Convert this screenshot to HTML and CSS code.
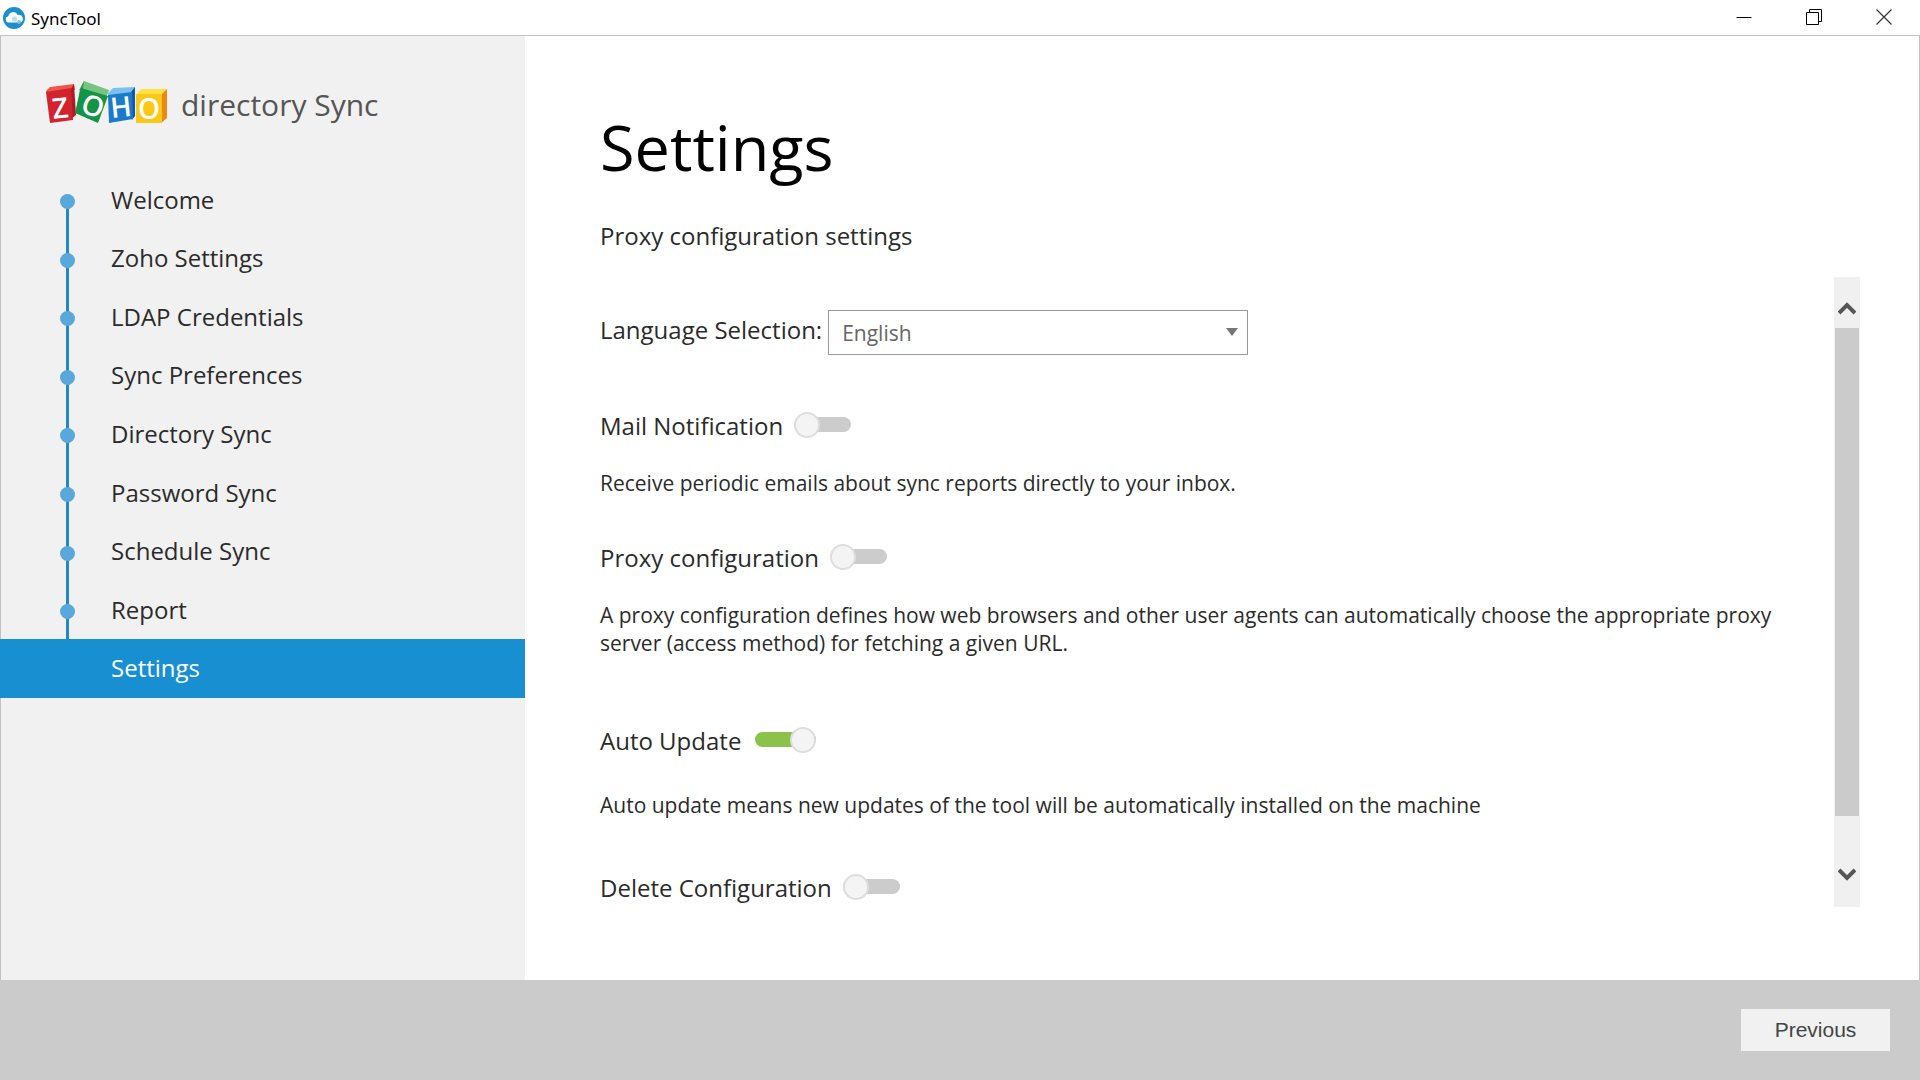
FILE: index.html
```html
<!DOCTYPE html>
<html lang="en">
<head>
<meta charset="utf-8">
<title>SyncTool</title>
<link rel="stylesheet" href="styles.css">
</head>
<body>
<div class="window">
  <header class="titlebar">
    <svg class="app-icon" viewBox="0 0 24 24" aria-hidden="true">
      <circle cx="12" cy="12" r="11" fill="#1d8fce"/>
      <path d="M6.5 16.5a3.2 3.2 0 0 1-.2-6.3 5 5 0 0 1 9.4-1.3 3.9 3.9 0 0 1 2.3 7.600z" fill="#fff"/>
      <circle cx="12.5" cy="13" r="2.6" fill="#b9dcf0"/>
      <circle cx="17" cy="16" r="2" fill="#7fbfe3"/>
    </svg>
    <span class="app-name">SyncTool</span>
    <div class="window-controls">
      <button type="button" aria-label="Minimize"><svg viewBox="0 0 16 16"><path d="M.5 8.5h15" stroke="#000" stroke-width="1"/></svg></button>
      <button type="button" aria-label="Restore"><svg viewBox="0 0 16 16"><path d="M.5 3.5h12v12H.5zM3.5 3.5v-3h12v12h-3" fill="none" stroke="#000"/></svg></button>
      <button type="button" aria-label="Close"><svg viewBox="0 0 16 16"><path d="M.5.5l15 15M15.5.5l-15 15" stroke="#333" stroke-width="1.2"/></svg></button>
    </div>
  </header>
  <div class="body">
    <aside class="sidebar">
      <div class="brand">
        <svg class="logo" viewBox="0 0 122 42" role="img" aria-label="Zoho">
          <path d="M1 8l4-4 24-3 1 6-28 5z" fill="#f0574c"/>
          <path d="M26 6l3-5 2 31-5 4z" fill="#a81c22"/>
          <path d="M1 9l25-4 2 32-23 3z" fill="#d2232f"/>
          <path d="M34 7l5-9 25 9-3 8z" fill="#76c57e"/>
          <path d="M35 6l4-8-3 24-5 6z" fill="#2f9a4b"/>
          <path d="M36 5l27 8-10 27-23-10z" fill="#159447"/>
          <path d="M63 10l5-5 22-1-3 7-24 3z" fill="#7cc0f0"/>
          <path d="M86 9l4-5v29l-3 4z" fill="#0d5aa6"/>
          <path d="M63 12l24-3 1 27-24 4z" fill="#1a7bc9"/>
          <path d="M91 12l5-6h26l-5 6z" fill="#ffe24a"/>
          <path d="M116 12l6-6v29l-6 5z" fill="#e88a14"/>
          <path d="M91 11h26v29H91z" fill="#fbc915"/>
          <g class="logo-letters">
            <text x="15" y="35" transform="rotate(-6 15 24)">Z</text>
            <text x="48" y="33" transform="rotate(20 48 23)">O</text>
            <text x="76" y="34" transform="rotate(-6 76 24)">H</text>
            <text x="104" y="36">O</text>
          </g>
        </svg>
        <span class="brand-name">directory Sync</span>
      </div>
      <nav class="steps">
        <a href="#welcome">Welcome</a>
        <a href="#zoho">Zoho Settings</a>
        <a href="#ldap">LDAP Credentials</a>
        <a href="#preferences">Sync Preferences</a>
        <a href="#directory">Directory Sync</a>
        <a href="#password">Password Sync</a>
        <a href="#schedule">Schedule Sync</a>
        <a href="#report">Report</a>
        <a href="#settings" class="current" aria-current="page">Settings</a>
      </nav>
    </aside>
    <main class="content">
      <h1>Settings</h1>
      <p class="subtitle">Proxy configuration settings</p>
      <div class="pane">
        <form class="options">
          <div class="row language">
            <label for="language">Language Selection:</label>
            <span class="select"><select id="language"><option>English</option></select></span>
          </div>
          <section class="option">
            <div class="row"><label for="mail">Mail Notification</label><input type="checkbox" class="switch" id="mail"></div>
            <p>Receive periodic emails about sync reports directly to your inbox.</p>
          </section>
          <section class="option proxy">
            <div class="row"><label for="proxy">Proxy configuration</label><input type="checkbox" class="switch" id="proxy"></div>
            <p>A proxy configuration defines how web browsers and other user agents can automatically choose the appropriate proxy server (access method) for fetching a given URL.</p>
          </section>
          <section class="option update">
            <div class="row"><label for="update">Auto Update</label><input type="checkbox" class="switch" id="update" checked></div>
            <p>Auto update means new updates of the tool will be automatically installed on the machine</p>
          </section>
          <section class="option">
            <div class="row"><label for="delete">Delete Configuration</label><input type="checkbox" class="switch" id="delete"></div>
          </section>
        </form>
        <div class="scrollbar">
          <button type="button" aria-label="Scroll up"><svg viewBox="0 0 18 14"><path d="M1 12l8-8 8 8" fill="none" stroke="#555" stroke-width="4"/></svg></button>
          <div class="track"><div class="thumb"></div></div>
          <button type="button" aria-label="Scroll down"><svg viewBox="0 0 18 14"><path d="M1 2l8 8 8-8" fill="none" stroke="#555" stroke-width="4"/></svg></button>
        </div>
      </div>
    </main>
  </div>
  <footer class="footer"><button type="button" class="previous">Previous</button></footer>
</div>
</body>
</html>
```
FILE: styles.css
```css
*, *::before, *::after { box-sizing: border-box; }

body {
  margin: 0;
  font-family: "Open Sans", "Noto Sans", sans-serif;
  font-size: 24px;
  line-height: 32px;
  color: #2b2b2b;
  background: #fff;
}

button { border: 0; padding: 0; background: none; }
svg { display: block; }
h1, p { margin: 0; font-weight: 400; }

.window { display: flex; flex-direction: column; min-height: 100vh; }

.titlebar {
  display: flex;
  align-items: center;
  height: 36px;
  padding: 0 1px 0 2px;
  border-bottom: 1px solid #c2c2c2;
}
.app-icon { width: 24px; height: 24px; }
.app-name { margin-left: 5px; padding-top: 2px; font-family: "Noto Sans", sans-serif; font-size: 17px; line-height: 24px; color: #000; }
.window-controls { display: flex; margin-left: auto; }
.window-controls button { display: grid; place-items: center; width: 70px; height: 35px; padding-bottom: 2px; }
.window-controls svg { width: 16px; height: 16px; }

.body {
  display: flex;
  flex: 1;
  border: solid #c2c2c2;
  border-width: 0 1px;
}

.sidebar { flex: none; width: 525px; margin-left: -1px; background: #f1f1f1; border-left: 1px solid #c2c2c2; }
.brand { display: flex; align-items: center; height: 135px; padding-left: 44px; }
.logo { width: 122px; height: 42px; overflow: visible; }
.logo-letters { font-family: "Open Sans", sans-serif; font-size: 28px; font-weight: 600; fill: #fff; text-anchor: middle; }
.brand-name { margin-left: 14px; padding-top: 2px; font-size: 30px; line-height: 40px; color: #555; }

.steps { display: grid; grid-auto-rows: 1fr; height: 527px; }
.steps a {
  position: relative;
  display: flex;
  align-items: center;
  padding: 0 0 1px 110px;
  color: #2b2b2b;
  text-decoration: none;
}
.steps a::before {
  content: "";
  position: absolute;
  left: 65px;
  top: 0;
  bottom: 0;
  width: 3px;
  background: #2389c6;
}
.steps a:first-child::before { top: 50%; }
.steps a::after {
  content: "";
  position: absolute;
  left: 59px;
  top: 50%;
  width: 15px;
  height: 15px;
  margin-top: -6px;
  border-radius: 50%;
  background: #58a8dc;
}
.steps .current { margin-left: -1px; padding-left: 111px; color: #fff; background: #188fd1; }
.steps .current::before, .steps .current::after { display: none; }

.content {
  display: flex;
  flex-direction: column;
  flex: 1;
  min-width: 0;
  padding: 69px 59px 73px 75px;
}
h1 { font-size: 63px; line-height: 84px; color: #000; }
.subtitle { margin-top: 31px; }

.pane { display: flex; flex: 1; margin-top: 25px; }
.options { flex: 1; padding: 33px 0 2px; }
.row { display: flex; align-items: center; }
.language { align-items: flex-start; margin-bottom: 55px; }
.language label { line-height: 40px; }
.select { position: relative; margin-left: 6px; }
.select::after {
  content: "";
  position: absolute;
  right: 10px;
  top: 18px;
  border: solid transparent;
  border-width: 8px 6px 0;
  border-top-color: #777;
  pointer-events: none;
}
.select select {
  display: block;
  appearance: none;
  width: 420px;
  height: 45px;
  padding: 0 13px;
  border: 1px solid #999;
  border-radius: 0;
  background: #fff;
  color: #666;
  font: inherit;
  font-size: 21px;
}

.option { margin-bottom: 45px; }
.option p { margin-top: 27px; padding-right: 40px; font-size: 21px; line-height: 28px; }
.proxy { margin-bottom: 68px; }
.update { margin-bottom: 53px; }
.update p { margin-top: 34px; }
.option:last-child { margin-bottom: 0; }

.switch {
  appearance: none;
  position: relative;
  width: 57px;
  height: 26px;
  margin: 0 0 2px 11px;
}
.switch::before {
  content: "";
  position: absolute;
  inset: 5px 0 6px;
  border-radius: 8px;
  background: #ccc;
}
.switch::after {
  content: "";
  position: absolute;
  top: 0;
  left: 0;
  width: 26px;
  height: 26px;
  border: 2px solid #dedede;
  border-radius: 50%;
  background: #f4f4f4;
}
.switch:checked { width: 61px; margin-left: 14px; }
.switch:checked::before { background: #8bc34a; }
.switch:checked::after { left: auto; right: 0; }

.scrollbar { display: flex; flex-direction: column; width: 26px; background: #f0f0f0; }
.scrollbar button { display: grid; justify-items: center; height: 51px; align-content: end; padding-bottom: 13px; }
.scrollbar button:last-child { height: 91px; padding-bottom: 25px; }
.scrollbar svg { width: 18px; height: 14px; }
.track { flex: 1; display: flex; padding: 0 1px; }
.thumb { flex: 1; background: #cbcbcb; }

.footer {
  display: flex;
  justify-content: flex-end;
  align-items: center;
  height: 100px;
  padding-right: 30px;
  background: #cbcbcb;
}
.previous {
  width: 149px;
  height: 42px;
  background: #f1f1f1;
  color: #444;
  font-family: "Liberation Sans", Arial, sans-serif;
  font-size: 21px;
}
```
